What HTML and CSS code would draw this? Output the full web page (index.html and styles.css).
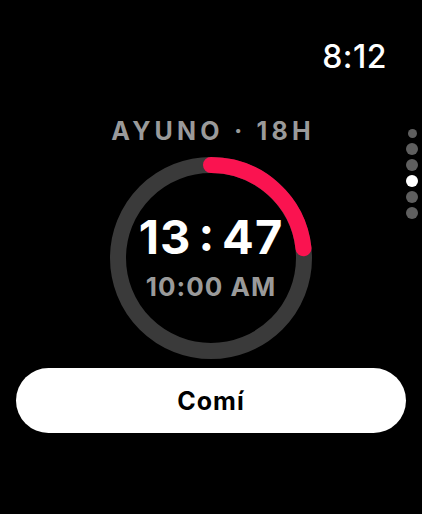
FILE: index.html
```html
<!DOCTYPE html>
<html lang="es">
<head>
  <meta charset="UTF-8">
  <title>Ayuno</title>
  <link rel="stylesheet" href="styles.css">
</head>
<body>
  <div class="watch">
    <header class="status">
      <span class="clock">8:12</span>
    </header>

    <main class="fast">
      <h1 class="fast-title">AYUNO · 18H</h1>

      <div class="ring">
        <svg class="ring-svg" width="202" height="202" viewBox="0 0 202 202">
          <circle cx="101" cy="101" r="93" fill="none" stroke="#3a3a3a" stroke-width="16"/>
          <circle cx="101" cy="101" r="93" fill="none" stroke="#fa1350" stroke-width="16"
                  stroke-linecap="round" stroke-dasharray="136 600"
                  transform="rotate(-90 101 101)"/>
        </svg>
        <div class="ring-text">
          <div class="elapsed">13<span class="colon">:</span>47</div>
          <div class="started">10:00 AM</div>
        </div>
      </div>

      <button class="ate">Comí</button>
    </main>

    <nav class="pager">
      <span class="dot small"></span>
      <span class="dot"></span>
      <span class="dot"></span>
      <span class="dot active"></span>
      <span class="dot"></span>
      <span class="dot"></span>
    </nav>
  </div>
</body>
</html>
```

FILE: styles.css
```css
body {
  margin: 0;
  background: #000;
  font-family: Inter, "Liberation Sans", sans-serif;
  color: #fff;
}

.watch {
  position: relative;
  width: 422px;
  height: 514px;
  overflow: hidden;
}

.status {
  display: flex;
  justify-content: flex-end;
  padding: 41px 35px 0 0;
}

.clock {
  font-size: 32px;
  line-height: 1;
  font-weight: 500;
  letter-spacing: 0.5px;
}

.fast {
  display: flex;
  flex-direction: column;
  align-items: center;
  padding-top: 46px;
}

.fast-title {
  margin: 0;
  font-size: 25px;
  line-height: 1;
  font-weight: 700;
  letter-spacing: 4.2px;
  margin-right: -4.2px;
  color: #9a9a9a;
}

.ring {
  display: grid;
  margin-top: 13px;
}

.ring-svg,
.ring-text {
  grid-area: 1 / 1;
}

.ring-text {
  display: flex;
  flex-direction: column;
  align-items: center;
  justify-content: center;
  padding-bottom: 4px;
}

.elapsed {
  font-size: 47px;
  line-height: 1;
  font-weight: 700;
  letter-spacing: 1px;
}

.colon {
  margin: 0 7px;
  position: relative;
  top: -3px;
}

.started {
  margin-top: 14px;
  font-size: 26px;
  line-height: 1;
  font-weight: 700;
  letter-spacing: 1px;
  color: #9a9a9a;
}

.ate {
  margin-top: 9px;
  width: 390px;
  height: 65px;
  border: none;
  border-radius: 33px;
  background: #fff;
  color: #000;
  font-family: inherit;
  font-size: 25px;
  font-weight: 700;
  letter-spacing: 1px;
}

.pager {
  position: absolute;
  top: 129px;
  right: 4px;
  display: flex;
  flex-direction: column;
  align-items: center;
  gap: 4px;
}

.dot {
  width: 12px;
  height: 12px;
  border-radius: 50%;
  background: #5f5f5f;
}

.dot.small {
  width: 9px;
  height: 9px;
  margin-bottom: 1px;
}

.dot.active {
  background: #fff;
}
```
